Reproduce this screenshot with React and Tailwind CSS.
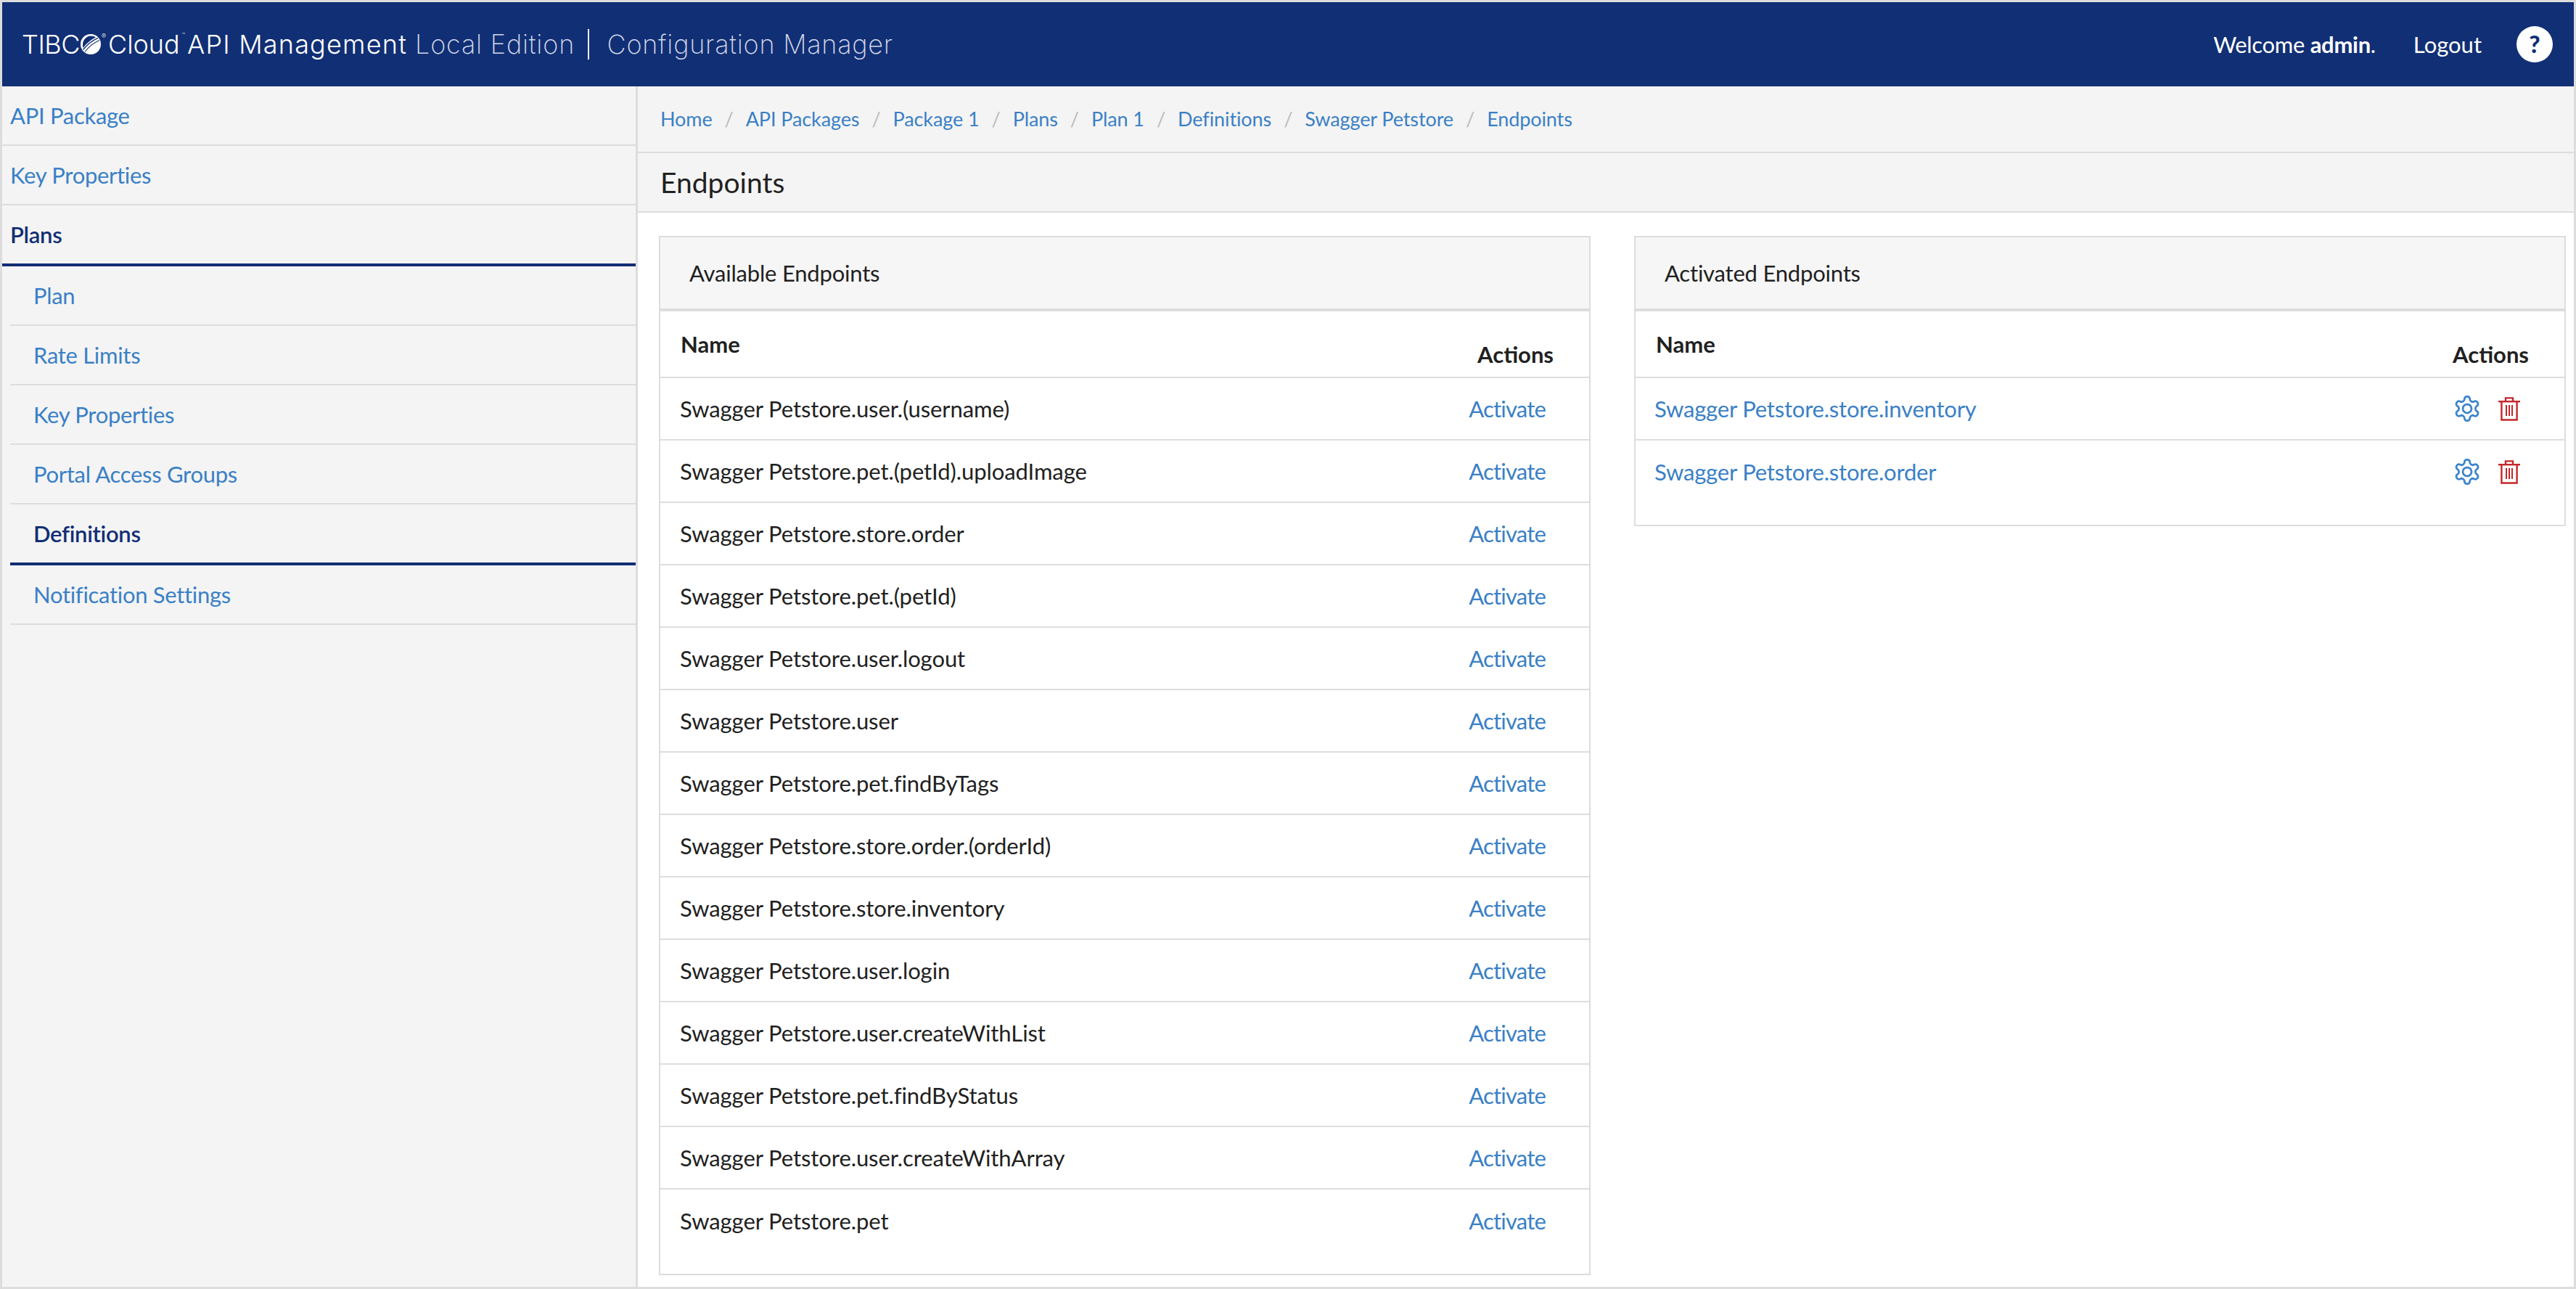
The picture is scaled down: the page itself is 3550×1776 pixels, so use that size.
import React from "react";

const SANS = "font-['Lato','Liberation_Sans',sans-serif]";

const available = [
  "Swagger Petstore.user.(username)",
  "Swagger Petstore.pet.(petId).uploadImage",
  "Swagger Petstore.store.order",
  "Swagger Petstore.pet.(petId)",
  "Swagger Petstore.user.logout",
  "Swagger Petstore.user",
  "Swagger Petstore.pet.findByTags",
  "Swagger Petstore.store.order.(orderId)",
  "Swagger Petstore.store.inventory",
  "Swagger Petstore.user.login",
  "Swagger Petstore.user.createWithList",
  "Swagger Petstore.pet.findByStatus",
  "Swagger Petstore.user.createWithArray",
  "Swagger Petstore.pet",
];
const crumbs = ["Home", "API Packages", "Package 1", "Plans", "Plan 1", "Definitions", "Swagger Petstore", "Endpoints"];

function Gear() {
  return (
    <svg width="40" height="40" viewBox="0 0 24 24" fill="none" stroke="#3b84cc" strokeWidth="1.65" strokeLinecap="round" strokeLinejoin="round">
      <path d="M12.22 2h-.44a2 2 0 0 0-2 2v.18a2 2 0 0 1-1 1.73l-.43.25a2 2 0 0 1-2 0l-.15-.08a2 2 0 0 0-2.73.73l-.22.38a2 2 0 0 0 .73 2.73l.15.1a2 2 0 0 1 1 1.72v.51a2 2 0 0 1-1 1.74l-.15.09a2 2 0 0 0-.73 2.73l.22.38a2 2 0 0 0 2.73.73l.15-.08a2 2 0 0 1 2 0l.43.25a2 2 0 0 1 1 1.73V20a2 2 0 0 0 2 2h.44a2 2 0 0 0 2-2v-.18a2 2 0 0 1 1-1.73l.43-.25a2 2 0 0 1 2 0l.15.08a2 2 0 0 0 2.73-.73l.22-.39a2 2 0 0 0-.73-2.73l-.15-.08a2 2 0 0 1-1-1.74v-.5a2 2 0 0 1 1-1.74l.15-.09a2 2 0 0 0 .73-2.73l-.22-.38a2 2 0 0 0-2.73-.73l-.15.08a2 2 0 0 1-2 0l-.43-.25a2 2 0 0 1-1-1.73V4a2 2 0 0 0-2-2z" />
      <circle cx="12" cy="12" r="3.6" />
    </svg>
  );
}

function Trash() {
  return (
    <svg width="30" height="33" viewBox="0 0 30 33" fill="none" stroke="#c4272b" strokeWidth="2.4">
      <path d="M0 6.2H30" />
      <path d="M10 6V1.4H20V6" />
      <path d="M4.4 6V31.5H25.6V6" />
      <path d="M11 11V26M15 11V26M19 11V26" strokeWidth="2" />
    </svg>
  );
}

function Globe() {
  return (
    <svg width="28" height="28" viewBox="0 0 28 28" className="shrink-0">
      <circle cx="14" cy="14" r="14" fill="#fff" />
      <path d="M3 15C3 8 8 3 14 2.6C17 2.5 19 3.2 21 4.6C14 8 8 13 3.6 19C3.2 18 3 16.5 3 15Z" fill="#112f75" />
      <path d="M3.6 21.5C9 14.5 16 9 24 5.4" fill="none" stroke="#112f75" strokeWidth="1.3" />
      <path d="M6 24.5C11 17.5 18 12 26 8.4" fill="none" stroke="#112f75" strokeWidth="1.1" />
    </svg>
  );
}

function SideItem({ label, sub, active }) {
  return (
    <div
      className={`flex items-center tracking-[-0.3px] ${sub ? "ml-[11px] pl-[32px]" : "pl-[11px]"} ${
        active ? "h-[84px] border-b-4 border-[#122e74] font-semibold text-[#122e74]" : "h-[82px] border-b-2 border-[#dddddd] text-[#3a80c6]"
      }`}
    >
      {label}
    </div>
  );
}

function CardHeader({ title }) {
  return (
    <div className="flex h-[102px] shrink-0 items-center border-b-4 border-[#dddddd] bg-[#f6f6f6] pl-[40px] text-[31px] tracking-[-0.2px] text-[#212121]">
      {title}
    </div>
  );
}

function TableHead() {
  return (
    <div className="relative flex h-[92px] shrink-0 border-b-2 border-[#dddddd] text-[31px] font-bold text-[#212121]">
      <span className="absolute left-[28px] top-[22px]">Name</span>
      <span className="absolute right-[49px] top-[36px]">Actions</span>
    </div>
  );
}

export default function App() {
  return (
    <div className={`flex h-[1776px] w-[3550px] flex-col overflow-hidden border-[3px] border-[#dddddd] bg-white text-[31px] ${SANS}`}>
      <header className="flex h-[116px] shrink-0 items-center bg-[#112f75] pl-[27px] pr-[29px] text-white">
        <div className="flex items-center font-['Inter',sans-serif] text-[36px] font-light leading-none">
          <span className="tracking-[-0.5px]">TIBC</span>
          <span className="ml-[1px]"><Globe /></span>
          <span className="relative -top-[12px] ml-[1px] w-[8px] text-[9px]">®</span>
          <span className="ml-[1px]">Cloud</span>
          <span className="relative -top-[13px] ml-[3px] text-[7px]">™</span>
          <span className="ml-[3px] tracking-[1.2px]">API Management</span>
          <span className="ml-[11px] font-extralight tracking-[0.8px] text-[#d3d9e8]">Local Edition</span>
          <span className="ml-[18px] h-[42px] w-[1.5px] bg-white" />
          <span className="ml-[25px] font-extralight tracking-[0.75px] text-[#d3d9e8]">Configuration Manager</span>
        </div>
        <div className="ml-auto flex items-center text-[31px]">
          <span className="tracking-[-0.3px]">Welcome <b className="font-bold">admin</b>.</span>
          <span className="ml-[52px]">Logout</span>
          <span className="ml-[48px] flex h-[50px] w-[50px] items-center justify-center rounded-full bg-white text-[33px] font-black text-[#112f75]">?</span>
        </div>
      </header>

      <div className="flex min-h-0 flex-1">
        <aside className="w-[876px] shrink-0 border-r-[3px] border-[#dddddd] bg-[#f4f4f4] text-[31px]">
          <SideItem label="API Package" />
          <SideItem label="Key Properties" />
          <SideItem label="Plans" active />
          <SideItem label="Plan" sub />
          <SideItem label="Rate Limits" sub />
          <SideItem label="Key Properties" sub />
          <SideItem label="Portal Access Groups" sub />
          <SideItem label="Definitions" sub active />
          <SideItem label="Notification Settings" sub />
        </aside>

        <main className="flex min-w-0 flex-1 flex-col">
          <nav className="flex h-[92px] shrink-0 items-center border-b-2 border-[#dddddd] bg-[#f4f4f4] pl-[31px] text-[27px] tracking-[-0.1px] text-[#3a80c6]">
            {crumbs.map((c, i) => (
              <React.Fragment key={c}>
                {i > 0 && <span className="mx-[17px] text-[#bbbbbb]">/</span>}
                <span>{c}</span>
              </React.Fragment>
            ))}
          </nav>
          <div className="flex h-[82px] shrink-0 items-center border-b-2 border-[#dddddd] bg-[#f4f4f4] pl-[31px] text-[39px] text-[#212121]">
            Endpoints
          </div>

          <div className="flex min-h-0 flex-1 items-start pl-[29px] pr-[11px] pt-[32px]">
            <section className="flex h-[1432px] w-[1284px] shrink-0 flex-col border-2 border-[#dddddd]">
              <CardHeader title="Available Endpoints" />
              <TableHead />
              {available.map((name, i) => (
                <div
                  key={name}
                  className={`flex h-[86px] shrink-0 items-center pl-[27px] pr-[60px] text-[#212121] ${i < available.length - 1 ? "border-b-2 border-[#dddddd]" : ""}`}
                >
                  <span className="tracking-[-0.08px]">{name}</span>
                  <span className="ml-auto tracking-[-0.8px] text-[#3a80c6]">Activate</span>
                </div>
              ))}
            </section>

            <section className="ml-[60px] flex h-[400px] min-w-0 flex-1 flex-col border-2 border-[#dddddd]">
              <CardHeader title="Activated Endpoints" />
              <TableHead />
              {["Swagger Petstore.store.inventory", "Swagger Petstore.store.order"].map((name, i) => (
                <div key={name} className={`flex h-[86px] shrink-0 items-center pl-[26px] pr-[61px] text-[#3a80c6] ${i === 0 ? "border-b-2 border-[#dddddd]" : ""}`}>
                  <span className="tracking-[-0.2px]">{name}</span>
                  <span className="ml-auto flex items-center gap-[23px]">
                    <Gear />
                    <Trash />
                  </span>
                </div>
              ))}
            </section>
          </div>
        </main>
      </div>
    </div>
  );
}
